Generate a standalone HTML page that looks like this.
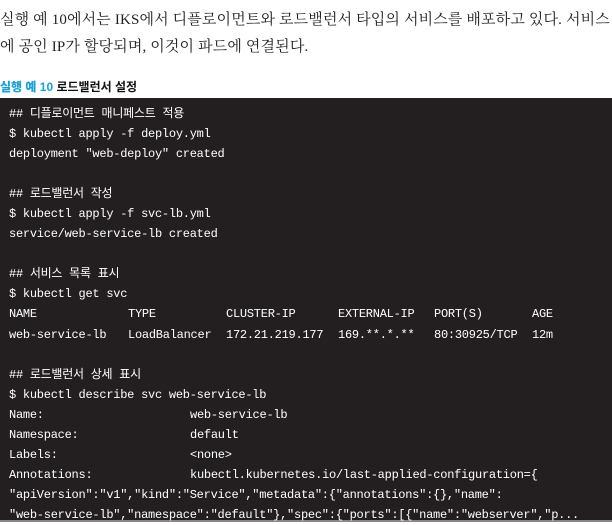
<!DOCTYPE html>
<html><head><meta charset="utf-8"><style>
body{margin:0;width:612px;height:525px;background:#fff;overflow:hidden;position:relative}
.p{position:absolute;left:0;font-family:"Liberation Serif","Noto Serif CJK SC",serif;font-size:15px;color:#222;white-space:nowrap;letter-spacing:0.15px}
.cap{position:absolute;left:0;top:78px;font-family:"Liberation Sans","Noto Sans CJK KR",sans-serif;font-size:12px;font-weight:bold;color:#111}
.cap b{color:#1a9fd9}
.box{position:absolute;left:0;top:98px;width:612px;height:422px;background:#231f20;border-bottom:2px solid #888}
.code{position:absolute;left:9px;top:6px;font-family:"Liberation Mono","Noto Sans CJK KR",monospace;font-size:12px;letter-spacing:-0.25px;line-height:20.05px;color:#fff;white-space:pre}
.c{display:inline-block}
.k{display:inline-block;width:181px}
</style></head><body>
<div class="p" style="top:8px">실행 예 10에서는 IKS에서 디플로이먼트와 로드밸런서 타입의 서비스를 배포하고 있다. 서비스</div>
<div class="p" style="top:35px">에 공인 IP가 할당되며, 이것이 파드에 연결된다.</div>
<div class="cap"><b>실행 예 10</b> 로드밸런서 설정</div>
<div class="box"><div class="code">## 디플로이먼트 매니페스트 적용
$ kubectl apply -f deploy.yml
deployment "web-deploy" created

## 로드밸런서 작성
$ kubectl apply -f svc-lb.yml
service/web-service-lb created

## 서비스 목록 표시
$ kubectl get svc
<span class="c" style="width:119px">NAME</span><span class="c" style="width:98px">TYPE</span><span class="c" style="width:112px">CLUSTER-IP</span><span class="c" style="width:96px">EXTERNAL-IP</span><span class="c" style="width:98px">PORT(S)</span>AGE
<span class="c" style="width:119px">web-service-lb</span><span class="c" style="width:98px">LoadBalancer</span><span class="c" style="width:112px">172.21.219.177</span><span class="c" style="width:96px">169.**.*.**</span><span class="c" style="width:98px">80:30925/TCP</span>12m

## 로드밸런서 상세 표시
$ kubectl describe svc web-service-lb
<span class="k">Name:</span>web-service-lb
<span class="k">Namespace:</span>default
<span class="k">Labels:</span>&lt;none&gt;
<span class="k">Annotations:</span>kubectl.kubernetes.io/last-applied-configuration={
"apiVersion":"v1","kind":"Service","metadata":{"annotations":{},"name":
"web-service-lb","namespace":"default"},"spec":{"ports":[{"name":"webserver","p...</div></div>
</body></html>
